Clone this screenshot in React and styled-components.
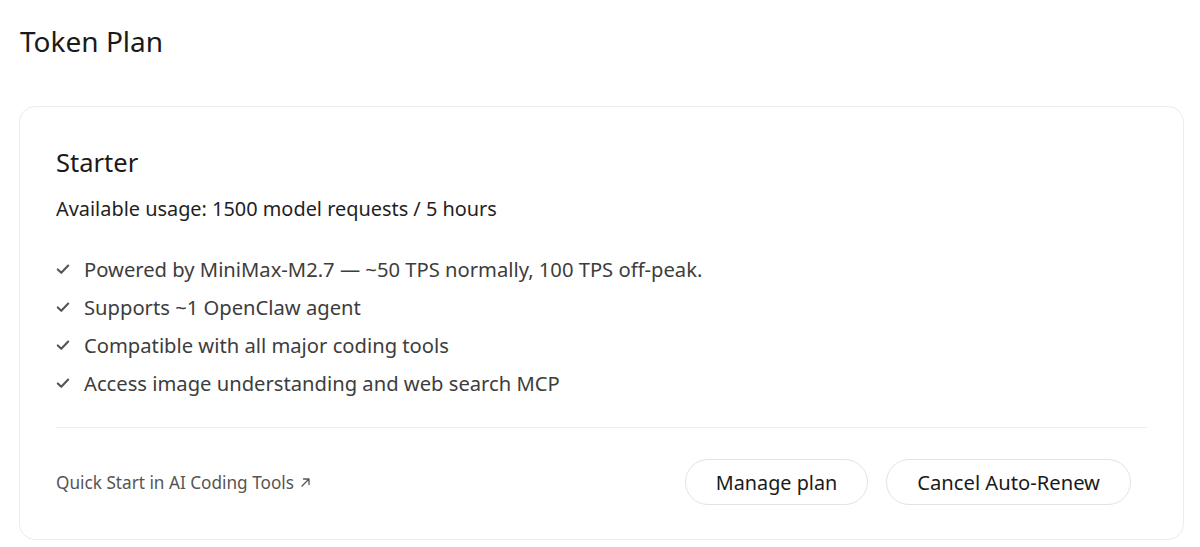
import React from "react";
import styled, { createGlobalStyle } from "styled-components";

const Global = createGlobalStyle`
  html, body { margin: 0; padding: 0; background: #fff; }
  body { font-family: "Noto Sans", "Open Sans", sans-serif; color: #1a1a1a; }
`;

const Page = styled.div`
  padding: 22px 16px 0 19px;
`;

const Title = styled.h1`
  margin: 0 0 0 1px;
  font-size: 28px;
  font-weight: 400;
  line-height: 38px;
  color: #1a1a1a;
`;

const Card = styled.section`
  margin-top: 46px;
  border: 1px solid #ececec;
  border-radius: 16px;
  padding: 38px 36px 34px 36px;
  box-sizing: border-box;
  height: 434px;
`;

const PlanName = styled.h2`
  margin: 0;
  font-size: 25.5px;
  font-weight: 400;
  line-height: 34px;
  color: #1a1a1a;
`;

const Usage = styled.p`
  margin: 16px 0 0;
  font-size: 19.9px;
  line-height: 28px;
  color: #1f1f1f;
`;

const Features = styled.ul`
  list-style: none;
  margin: 32px 0 0;
  padding: 0;
  display: flex;
  flex-direction: column;
  gap: 10px;
`;

const Feature = styled.li`
  display: flex;
  align-items: center;
  gap: 14px;
  font-size: 20.2px;
  line-height: 28px;
  color: #3d3d3d;
`;

const Divider = styled.hr`
  border: none;
  border-top: 1px solid #eeeeee;
  margin: 30px 0 0;
`;

const Footer = styled.div`
  display: flex;
  align-items: center;
  justify-content: space-between;
  margin-top: 31px;
  padding-right: 16px;
`;

const QuickLink = styled.a`
  display: inline-flex;
  align-items: center;
  gap: 6px;
  font-size: 17.2px;
  color: #555;
  text-decoration: none;
`;

const Actions = styled.div`
  display: flex;
  gap: 18px;
`;

const PillButton = styled.button`
  font-family: inherit;
  font-size: ${(p) => p.$fs}px;
  color: #1a1a1a;
  background: #fff;
  border: 1px solid #e3e3e3;
  border-radius: 999px;
  height: 46px;
  padding: 0 30px;
  cursor: pointer;
`;

const Check = () => (
  <svg width="14" height="14" viewBox="0 0 14 14" fill="none">
    <path d="M1.8 7.4 L5.3 10.8 L12.2 3.5" stroke="#555" strokeWidth="2.1" strokeLinecap="round" strokeLinejoin="round" />
  </svg>
);

const Arrow = () => (
  <svg width="11" height="11" viewBox="0 0 11 11" fill="none">
    <path d="M2 9 L9 2 M3.5 2 H9 V7.5" stroke="#555" strokeWidth="1.3" strokeLinecap="round" strokeLinejoin="round" />
  </svg>
);

const features = [
  "Powered by MiniMax-M2.7 — ~50 TPS normally, 100 TPS off-peak.",
  "Supports ~1 OpenClaw agent",
  "Compatible with all major coding tools",
  "Access image understanding and web search MCP",
];

export default function App() {
  return (
    <>
      <Global />
      <Page>
        <Title>Token Plan</Title>
        <Card>
          <PlanName>Starter</PlanName>
          <Usage>Available usage: 1500 model requests / 5 hours</Usage>
          <Features>
            {features.map((f) => (
              <Feature key={f}>
                <Check />
                {f}
              </Feature>
            ))}
          </Features>
          <Divider />
          <Footer>
            <QuickLink href="#">
              Quick Start in AI Coding Tools <Arrow />
            </QuickLink>
            <Actions>
              <PillButton $fs={19.8}>Manage plan</PillButton>
              <PillButton $fs={20.2}>Cancel Auto-Renew</PillButton>
            </Actions>
          </Footer>
        </Card>
      </Page>
    </>
  );
}
